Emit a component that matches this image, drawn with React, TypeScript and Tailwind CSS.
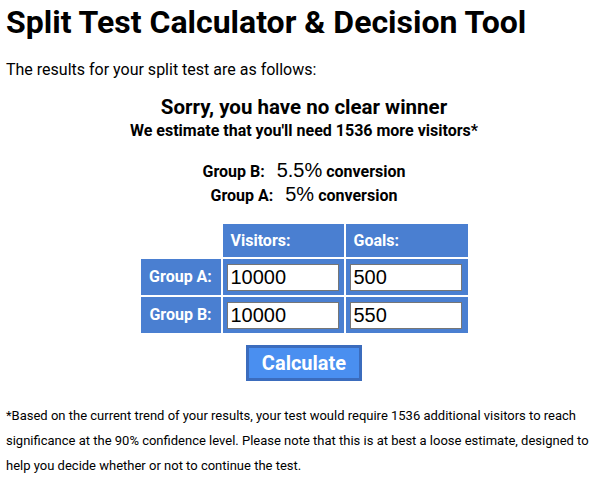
import React from "react";

export default function App() {
  const cellHead = "bg-[#4a7fd1] text-white font-bold text-[16px] flex items-center pl-[8px]";
  const rowHead = "bg-[#4a7fd1] text-white font-bold text-[16px] flex items-center justify-center";
  const inputCls =
    "w-[112px] h-[27px] border border-[#767676] bg-white text-black text-[20px] px-[3px] font-['Liberation_Sans',Arial,sans-serif] outline-none";
  return (
    <div className="font-['Roboto',sans-serif] text-black pl-[6px] bg-white min-h-[492px]">
      <h1 className="text-[32px] font-bold leading-[40px] pt-[2px]">Split Test Calculator &amp; Decision Tool</h1>
      <p className="text-[16px] leading-[20px] mt-[18px]">The results for your split test are as follows:</p>
      <div className="pl-[2px]">
        <div className="text-center mt-[14px]">
          <div className="text-[20.5px] font-bold leading-[26px]">Sorry, you have no clear winner</div>
          <div className="text-[16px] font-bold leading-[22px]">We estimate that you'll need 1536 more visitors*</div>
        </div>
        <div className="text-center mt-[17px] font-bold text-[16px]">
          <div className="leading-[23px]">
            Group B:&nbsp;&nbsp; <span className="font-normal text-[20px] font-['Liberation_Sans',Arial,sans-serif]">5.5%</span> conversion
          </div>
          <div className="leading-[23px]">
            Group A:&nbsp;&nbsp; <span className="font-normal text-[20px] font-['Liberation_Sans',Arial,sans-serif]">5%</span> conversion
          </div>
        </div>
        <div className="flex justify-center mt-[17px]">
          <div className="grid grid-cols-[80px_121px_122px] grid-rows-[33px_36px_36px] gap-[2px]">
            <div />
            <div className={cellHead}>Visitors:</div>
            <div className={cellHead}>Goals:</div>
            <div className={rowHead}>Group A:</div>
            <div className="bg-[#4a7fd1] flex items-center pl-[4px]">
              <input className={inputCls} defaultValue="10000" />
            </div>
            <div className="bg-[#4a7fd1] flex items-center pl-[4px]">
              <input className={inputCls} defaultValue="500" />
            </div>
            <div className={rowHead}>Group B:</div>
            <div className="bg-[#4a7fd1] flex items-center pl-[4px]">
              <input className={inputCls} defaultValue="10000" />
            </div>
            <div className="bg-[#4a7fd1] flex items-center pl-[4px]">
              <input className={inputCls} defaultValue="550" />
            </div>
          </div>
        </div>
        <div className="flex justify-center mt-[12px]">
          <button className="w-[116px] h-[36px] border-[3px] border-[#3b6cbd] bg-[#4a8ff0] text-white font-bold text-[20px] leading-none">
            Calculate
          </button>
        </div>
      </div>
      <p className="text-[13px] leading-[25px] mt-[22px] pr-[6px]">
        *Based on the current trend of your results, your test would require 1536 additional visitors to reach
        significance at the 90% confidence level. Please note that this is at best a loose estimate, designed to
        help you decide whether or not to continue the test.
      </p>
    </div>
  );
}
